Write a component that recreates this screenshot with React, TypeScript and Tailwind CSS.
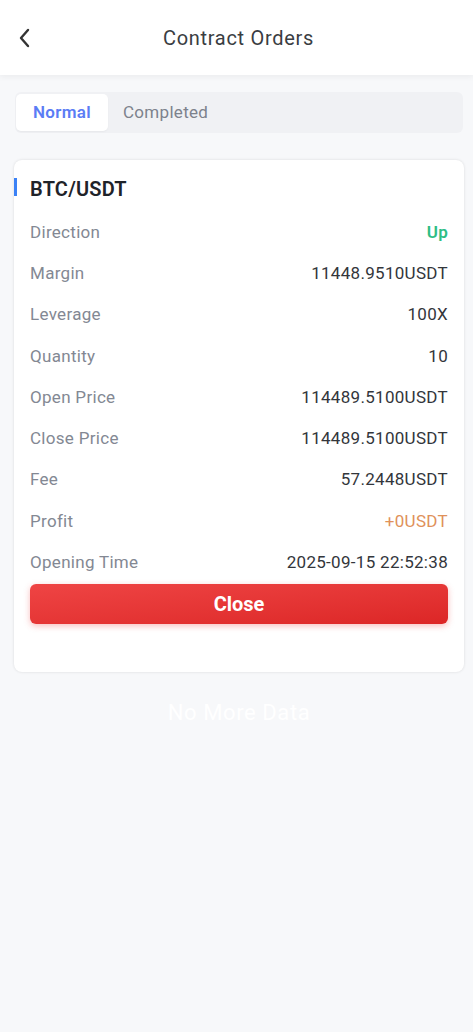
const rows: { label: string; value: string; color?: string }[] = [
  { label: "Direction", value: "Up", color: "text-[#2ebd85] font-semibold" },
  { label: "Margin", value: "11448.9510USDT" },
  { label: "Leverage", value: "100X" },
  { label: "Quantity", value: "10" },
  { label: "Open Price", value: "114489.5100USDT" },
  { label: "Close Price", value: "114489.5100USDT" },
  { label: "Fee", value: "57.2448USDT" },
  { label: "Profit", value: "+0USDT", color: "text-[#e0915a]" },
  { label: "Opening Time", value: "2025-09-15 22:52:38" },
];

export default function App() {
  return (
    <div
      className="min-h-[1032px] w-full bg-[#f7f8fa]"
      style={{ fontFamily: "Roboto, 'Noto Sans', sans-serif" }}
    >
      <div className="relative flex h-[75px] items-center justify-center bg-white pl-[4px] shadow-[0_2px_6px_rgba(0,0,0,0.05)]">
        <button className="absolute left-[16px] top-[26px] text-[#333]">
          <svg width="18" height="24" viewBox="0 0 18 24" fill="none">
            <path d="M12 4 L5 12 L12 20" stroke="#333" strokeWidth="2.4" strokeLinecap="round" strokeLinejoin="round" />
          </svg>
        </button>
        <h1 className="text-[20px] font-normal tracking-[0.7px] text-[#3a3d42]">Contract Orders</h1>
      </div>

      <div className="ml-[15px] mr-[10px] mt-[17px] flex h-[41px] items-center rounded-[6px] bg-[#f0f1f4] px-[1px]">
        <div className="flex h-[37px] w-[92px] items-center justify-center rounded-[5px] bg-white text-[17px] font-semibold tracking-[0.3px] text-[#5b7cf5] shadow-[0_1px_2px_rgba(0,0,0,0.04)]">
          Normal
        </div>
        <div className="ml-[15px] text-[17px] tracking-[0.3px] text-[#7d828c]">Completed</div>
      </div>

      <div className="ml-[14px] mr-[9px] mt-[27px] rounded-[8px] bg-white pb-[48px] pt-[16px] shadow-[0_0_3px_rgba(0,0,0,0.12)]">
        <div className="relative flex h-[26px] items-center pl-[16px]">
          <div className="absolute left-0 top-[2px] h-[18px] w-[3px] bg-[#3b82f6]" />
          <span className="text-[20px] font-semibold tracking-[0.2px] text-[#1f2329]">BTC/USDT</span>
        </div>
        <div className="mt-[10px] px-[16px]">
          {rows.map((r) => (
            <div key={r.label} className="flex h-[41.25px] items-center justify-between text-[17px] tracking-[0.3px]">
              <span className="text-[#838893]">{r.label}</span>
              <span className={r.color ?? "text-[#33363b]"}>{r.value}</span>
            </div>
          ))}
          <button className="mt-[1px] flex h-[40px] w-full items-center justify-center rounded-[6px] bg-gradient-to-br from-[#ef4444] to-[#dc2626] text-[20px] font-bold text-white shadow-[0_2px_6px_rgba(239,68,68,0.35)]">
            Close
          </button>
        </div>
      </div>

      <div className="ml-[14px] mr-[9px] mt-[24px] text-center text-[22px] tracking-[0.6px] text-white">No More Data</div>
    </div>
  );
}
